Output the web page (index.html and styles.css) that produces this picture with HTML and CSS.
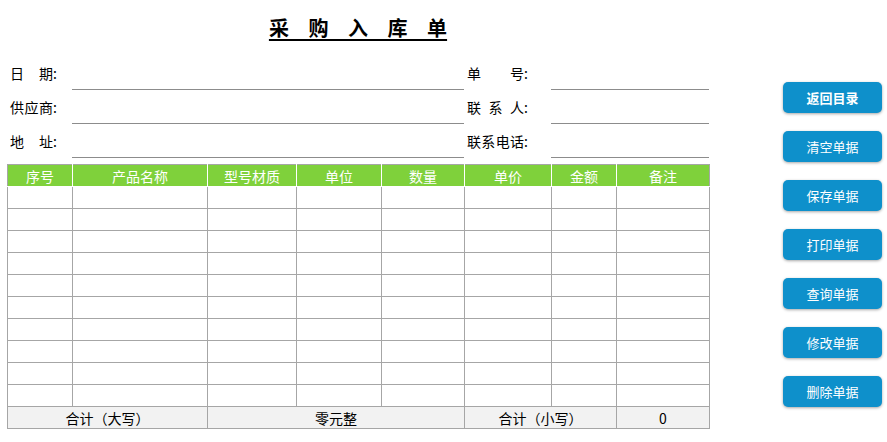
FILE: index.html
```html
<!DOCTYPE html>
<html lang="zh">
<head>
  <meta charset="UTF-8">
  <title>采购入库单</title>
  <link rel="stylesheet" href="styles.css">
</head>
<body>
  <div class="sheet">
    <h1 class="title">采 购 入 库 单</h1>

    <!-- 表头信息 -->
    <div class="info">
      <div class="info-label"><span class="just3">日期</span>:</div>
      <div class="info-field"></div>
      <div class="info-label right"><span class="just4">单号</span>:</div>
      <div class="info-field"></div>

      <div class="info-label"><span class="just3">供应商</span>:</div>
      <div class="info-field"></div>
      <div class="info-label right"><span class="just4">联系人</span>:</div>
      <div class="info-field"></div>

      <div class="info-label"><span class="just3">地址</span>:</div>
      <div class="info-field"></div>
      <div class="info-label right"><span class="just4">联系电话</span>:</div>
      <div class="info-field"></div>
    </div>

    <!-- 明细 -->
    <table class="grid">
      <colgroup>
        <col style="width:65px"><col style="width:135px"><col style="width:89px"><col style="width:85px">
        <col style="width:83px"><col style="width:87px"><col style="width:65px"><col style="width:93px">
      </colgroup>
      <thead>
        <tr>
          <th>序号</th><th>产品名称</th><th>型号材质</th><th>单位</th>
          <th>数量</th><th>单价</th><th>金额</th><th>备注</th>
        </tr>
      </thead>
      <tbody id="rows"></tbody>
      <tfoot>
        <tr>
          <td colspan="2">合计（大写）</td>
          <td colspan="3">零元整</td>
          <td colspan="2">合计（小写）</td>
          <td>0</td>
        </tr>
      </tfoot>
    </table>
  </div>

  <div class="tools">
    <button class="tool-btn bold">返回目录</button>
    <button class="tool-btn">清空单据</button>
    <button class="tool-btn">保存单据</button>
    <button class="tool-btn">打印单据</button>
    <button class="tool-btn">查询单据</button>
    <button class="tool-btn">修改单据</button>
    <button class="tool-btn">删除单据</button>
  </div>

  <script>
    // 10 empty rows
    var tbody = document.getElementById('rows');
    for (var i = 0; i < 10; i++) {
      var tr = document.createElement('tr');
      for (var j = 0; j < 8; j++) {
        tr.appendChild(document.createElement('td'));
      }
      tbody.appendChild(tr);
    }
  </script>
</body>
</html>
```

FILE: styles.css
```css
body {
  margin: 0;
  font-family: "Noto Sans CJK SC", "Liberation Sans", sans-serif;
  color: #000;
  background: #fff;
  display: flex;
}

.sheet {
  margin-left: 7px;
  width: 702px;
}

.title {
  margin: 0;
  height: 56px;
  line-height: 56px;
  text-align: center;
  font-size: 20px;
  font-weight: bold;
  text-decoration: underline;
  text-underline-offset: 3px;
  word-spacing: 15px;
}

.info {
  display: grid;
  grid-template-columns: 65px 392px 87px 158px;
  grid-auto-rows: 34px;
  font-size: 14px;
}

.info-label {
  padding-left: 3px;
  display: flex;
  align-items: center;
  padding-bottom: 1px;
  white-space: nowrap;
}

.info-field {
  border-bottom: 1px solid #8c8c8c;
}

.just3,
.just4 {
  display: inline-block;
  text-align: justify;
  text-align-last: justify;
  white-space: nowrap;
}

.just3 { width: 43px; }
.just4 { width: 57px; }

.grid {
  margin-top: 6px;
  width: 702px;
  border-collapse: collapse;
  table-layout: fixed;
  font-size: 14px;
}

.grid th,
.grid td {
  height: 21px;
  padding: 0;
  border: 1px solid #a6a6a6;
  text-align: center;
  line-height: 20px;
}

.grid th {
  background-color: #7fd13b;
  color: #fff;
  font-weight: normal;
  border-color: #fff;
  border-top-color: #a6a6a6;
}

.grid th:first-child { border-left-color: #a6a6a6; }
.grid th:last-child { border-right-color: #a6a6a6; }

.grid tfoot td {
  background-color: #f2f2f2;
}

.tools {
  margin-left: 74px;
  padding-top: 82px;
  display: flex;
  flex-direction: column;
  gap: 18px;
}

.tool-btn {
  width: 99px;
  height: 31px;
  border: none;
  border-radius: 5px;
  background-color: #0e90cb;
  color: #fff;
  font-family: "Noto Sans CJK SC", sans-serif;
  font-size: 13px;
  font-weight: normal;
  box-shadow: 0 1px 3px rgba(0, 0, 0, 0.35);
  padding: 0;
  cursor: pointer;
}

.tool-btn.bold {
  font-weight: bold;
}
```
